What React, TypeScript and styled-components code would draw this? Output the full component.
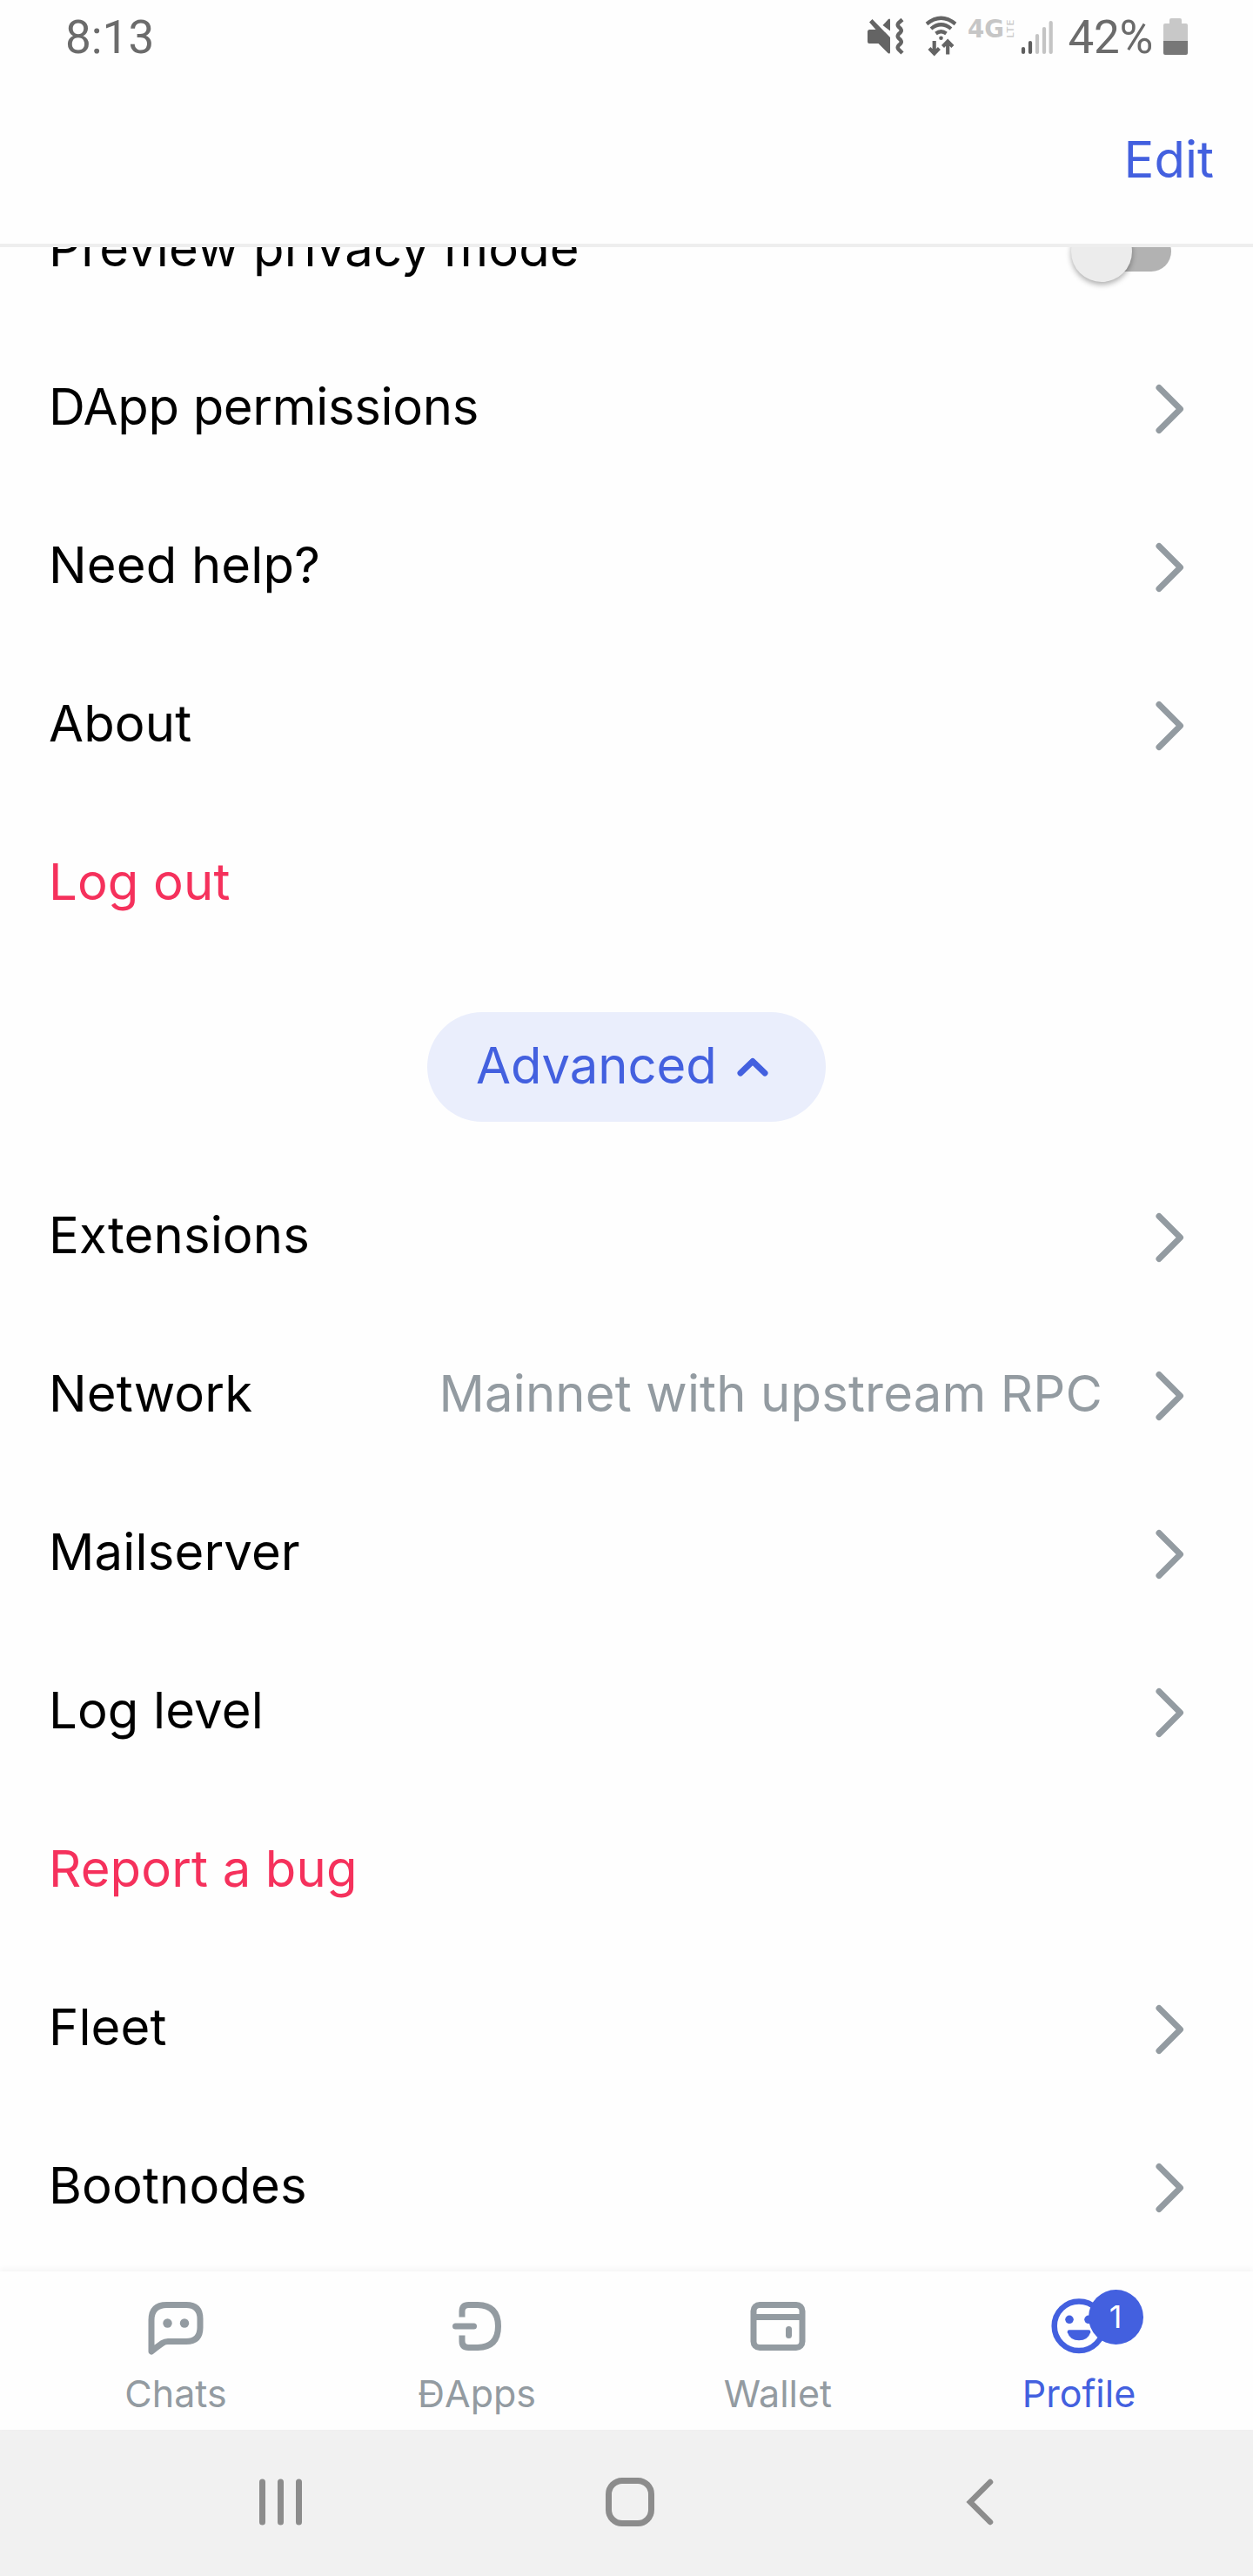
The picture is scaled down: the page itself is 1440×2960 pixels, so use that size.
import React from 'react';
import styled, { createGlobalStyle, css } from 'styled-components';

const blue = '#4360df';
const gray = '#939ba1';

const GlobalStyle = createGlobalStyle`
  * { box-sizing: border-box; }
  body { margin: 0; background: #fefefe; }
`;

const Screen = styled.div`
  width: 1440px;
  height: 2960px;
  display: flex;
  flex-direction: column;
  overflow: hidden;
  background: #fefefe;
  font-family: Inter, 'Liberation Sans', sans-serif;
`;

const StatusBar = styled.header`
  height: 84px;
  flex: none;
  display: flex;
  align-items: center;
  justify-content: space-between;
  padding: 0 75px;
  font-family: Roboto, sans-serif;
  font-size: 53px;
  line-height: 84px;
  color: #6b6b6b;
`;

const Clock = styled.span`
  padding-top: 2px;
`;

const StatusIcons = styled.div`
  display: flex;
  align-items: center;
  height: 84px;
`;

const StatusIcon = styled.span<{ $gap?: number; $lift?: number }>`
  display: flex;
  margin-left: ${(p) => p.$gap ?? 0}px;
  margin-bottom: ${(p) => p.$lift ?? 0}px;
`;

const Percent = styled.span`
  padding-top: 2px;
  margin-left: 17px;
  margin-right: 12px;
  letter-spacing: -0.3px;
`;

const Toolbar = styled.div`
  height: 200px;
  flex: none;
  display: flex;
  align-items: center;
  justify-content: flex-end;
  padding: 1px 45px 0 0;
  border-bottom: 4px solid #eee;
`;

const EditButton = styled.button`
  border: 0;
  padding: 0;
  background: none;
  font: 400 58px/70px Inter, sans-serif;
  color: ${blue};
`;

const List = styled.main`
  flex: none;
  height: 2326px;
  overflow: hidden;
`;

const ListContent = styled.div`
  margin-top: -87px;
`;

const Row = styled.div`
  height: 182px;
  display: flex;
  align-items: center;
  padding: 0 79px 0 56px;
`;

const rowText = css`
  font-size: 58px;
  line-height: 70px;
  padding-bottom: 6px;
  white-space: nowrap;
`;

const Label = styled.span<{ $danger?: boolean; $tracking?: number }>`
  ${rowText}
  flex: 1;
  letter-spacing: ${(p) => p.$tracking ?? 0.15}px;
  color: ${(p) => (p.$danger ? '#f5315c' : '#000')};
`;

const Value = styled.span`
  ${rowText}
  letter-spacing: 0.15px;
  color: ${gray};
  margin-right: 60px;
`;

const Track = styled.span`
  width: 105px;
  height: 46px;
  margin-right: 15px;
  margin-top: 2px;
  border-radius: 23px;
  background: #b2b2b2;
  display: flex;
  align-items: center;
`;

const Thumb = styled.span`
  width: 70px;
  height: 70px;
  flex: none;
  margin-left: -10px;
  border-radius: 50%;
  background: #ececec;
  box-shadow: 0 3px 6px rgba(0, 0, 0, 0.32);
`;

const AdvancedRow = styled.div`
  height: 224px;
  display: flex;
  justify-content: center;
  padding-top: 56px;
`;

const Chip = styled.button`
  width: 458px;
  height: 126px;
  border: 0;
  border-radius: 63px;
  padding: 0 66px 0 56px;
  display: flex;
  align-items: center;
  justify-content: space-between;
  background: #eaeefc;
  color: ${blue};
  font: 400 58px/118px Inter, sans-serif;
`;

const ChipText = styled.span`
  padding-bottom: 5px;
  letter-spacing: -0.1px;
`;

const TabBar = styled.nav`
  height: 182px;
  flex: none;
  display: flex;
  padding: 0 27px 0 29px;
  background: #fefefe;
  box-shadow: 0 -3px 6px rgba(0, 0, 0, 0.04);
  position: relative;
`;

const Tab = styled.div<{ $active?: boolean }>`
  flex: 1;
  display: flex;
  flex-direction: column;
  align-items: center;
  padding-top: 21px;
  color: ${(p) => (p.$active ? blue : gray)};
`;

const TabIcon = styled.span`
  width: 84px;
  height: 84px;
  position: relative;
  svg { display: block; }
`;

const TabLabel = styled.span`
  margin-top: 9px;
  font-size: 43px;
  line-height: 52px;
  white-space: nowrap;
`;

const Badge = styled.span`
  position: absolute;
  left: 52.5px;
  top: 0;
  width: 63px;
  height: 63px;
  border-radius: 50%;
  background: ${blue};
  color: #fff;
  font-size: 36px;
  line-height: 63px;
  text-align: center;
`;

const SystemNav = styled.footer`
  flex: 1;
  background: #f1f1f1;
  color: #8c8c8c;
  display: flex;
  align-items: center;
  justify-content: space-between;
  padding: 0 298px 3px;
`;

const HomeKey = styled.span`
  display: flex;
  margin-right: 9px;
`;

const Chevron = () => (
  <svg width="34" height="60" viewBox="0 0 34 60" fill="none" stroke={gray} strokeWidth="7" strokeLinecap="round" strokeLinejoin="round">
    <path d="M5 5.500 29.500 30 5 54.500" />
  </svg>
);

const MuteIcon = () => (
  <svg width="42" height="43" viewBox="0 0 42 43" fill="#646464">
    <path d="M2.500 14H9.500L2 5.500 5.500 2 26 23V40Q26 42.500 23.500 41L12.500 30H2Q0 30 0 28V16.500Q0 14 2.500 14z" />
    <path d="M17.500 9 24 2Q26 .500 26 3V15.500z" />
    <path d="M40 2.500 35.500 6.500Q34 8.500 35.500 10.500L38 13Q39.500 15 38 17L35.500 19.500Q34 21.500 35.500 23.500L38 26Q39.500 28 38 30L35.500 32.500Q34 34.500 35.500 36.500L40 41" fill="none" stroke="#646464" strokeWidth="4.500" />
  </svg>
);

const WifiIcon = () => (
  <svg width="38" height="48" viewBox="0 0 38 48" fill="none" stroke="#646464" strokeWidth="4.200">
    <path d="M2 9.500q16.500-13.500 33 0M7 15q11.500-9.500 23 0M12.500 20.500q6-4.500 12 0" />
    <circle cx="18.500" cy="25.800" r="2.300" fill="#646464" stroke="none" />
    <path d="M10.700 29v14.500M5 37.500l5.700 6 5.700-6M26.200 44.500V30M20.500 35.500l5.700-6 5.700 6" />
  </svg>
);

const LteIcon = () => (
  <svg width="54" height="42" viewBox="0 0 54 42" fill="#c6c6c6" fontFamily="'DejaVu Sans', sans-serif">
    <text x="0" y="22" fontSize="28" fontWeight="700" textLength="42" lengthAdjust="spacingAndGlyphs">4G</text>
    <text transform="translate(52.500 22.500) rotate(-90)" fontSize="11" textLength="21" lengthAdjust="spacing">LTE</text>
  </svg>
);

const SignalIcon = () => (
  <svg width="38" height="42" viewBox="0 0 38 42" strokeWidth="4.200" strokeLinecap="round">
    <path d="M3 35v4M11 28v11" stroke="#5e5e5e" />
    <path d="M19 20v19M27 12v27M34.700 5v34" stroke="#c4c4c4" />
  </svg>
);

const BatteryIcon = () => (
  <svg width="28" height="42" viewBox="0 0 28 42">
    <path d="M2 6h5V2q0-2 2-2h10q2 0 2 2v4h5q2 0 2 2v18H0V8q0-2 2-2z" fill="#c8c8c8" />
    <path d="M0 26h28v14q0 2-2 2H2q-2 0-2-2z" fill="#777" />
  </svg>
);

const ChatsIcon = () => (
  <svg width="84" height="84" viewBox="0 0 84 84" fill="none" stroke="currentColor" strokeWidth="7" strokeLinejoin="round">
    <path d="M14 71V35Q14 17.500 31.500 17.500H54Q70 17.500 70 33.500V43.500Q70 59.500 54 59.500H33Q29.500 59.500 26.500 61.500Q20 66 14 71Z" />
    <circle cx="32.500" cy="38.500" r="5.200" fill="currentColor" stroke="none" />
    <circle cx="52" cy="38.500" r="5.200" fill="currentColor" stroke="none" />
  </svg>
);

const DAppsIcon = () => (
  <svg width="84" height="84" viewBox="0 0 84 84" fill="none" stroke="currentColor" strokeWidth="7">
    <path d="M25 31.500V25Q25 17.500 32.500 17.500H43Q66.500 18 66.500 42T43 66.500H32.500Q25 66.500 25 59V52.500" />
    <path d="M17.500 42h21" strokeLinecap="round" />
  </svg>
);

const WalletIcon = () => (
  <svg width="84" height="84" viewBox="0 0 84 84" fill="none" stroke="currentColor" strokeWidth="7">
    <rect x="14" y="17.500" width="56" height="49" rx="7" />
    <path d="M14 31.500h56" />
    <path d="M54.500 45.500v7" strokeLinecap="round" />
  </svg>
);

const ProfileIcon = () => (
  <svg width="84" height="84" viewBox="0 0 84 84" fill="currentColor">
    <circle cx="42" cy="41.800" r="28.300" fill="none" stroke="currentColor" strokeWidth="6.500" />
    <circle cx="31" cy="34.300" r="4.800" />
    <circle cx="53" cy="34.300" r="4.800" />
    <path d="M31 46.300h22q2.800 0 2.200 3-3 9-13.200 9t-13.200-9q-.600-3 2.200-3z" />
  </svg>
);

interface ItemProps {
  label: string;
  value?: string;
  danger?: boolean;
  tracking?: number;
}

const Item = ({ label, value, danger, tracking }: ItemProps) => (
  <Row>
    <Label $danger={danger} $tracking={tracking}>{label}</Label>
    {value && <Value>{value}</Value>}
    {!danger && <Chevron />}
  </Row>
);

const mainItems: ItemProps[] = [
  { label: 'DApp permissions', tracking: -0.32 },
  { label: 'Need help?' },
  { label: 'About' },
  { label: 'Log out', danger: true },
];

const advancedItems: ItemProps[] = [
  { label: 'Extensions' },
  { label: 'Network', value: 'Mainnet with upstream RPC' },
  { label: 'Mailserver' },
  { label: 'Log level' },
  { label: 'Report a bug', danger: true },
  { label: 'Fleet' },
  { label: 'Bootnodes' },
];

export default function App() {
  return (
    <>
      <GlobalStyle />
      <Screen>
        <StatusBar>
          <Clock>8:13</Clock>
          <StatusIcons>
            <StatusIcon $lift={1}><MuteIcon /></StatusIcon>
            <StatusIcon $gap={24}><WifiIcon /></StatusIcon>
            <StatusIcon $gap={11}><LteIcon /></StatusIcon>
            <StatusIcon $gap={7}><SignalIcon /></StatusIcon>
            <Percent>42%</Percent>
            <BatteryIcon />
          </StatusIcons>
        </StatusBar>
        <Toolbar>
          <EditButton>Edit</EditButton>
        </Toolbar>
        <List>
          <ListContent>
            <Row>
              <Label>Preview privacy mode</Label>
              <Track><Thumb /></Track>
            </Row>
            {mainItems.map((item) => <Item key={item.label} {...item} />)}
            <AdvancedRow>
              <Chip>
                <ChipText>Advanced</ChipText>
                <svg width="36" height="22" viewBox="0 0 36 22" fill="none" stroke={blue} strokeWidth="7" strokeLinecap="round" strokeLinejoin="round">
                  <path d="M4 18 18 4.500 32 18" />
                </svg>
              </Chip>
            </AdvancedRow>
            {advancedItems.map((item) => <Item key={item.label} {...item} />)}
          </ListContent>
        </List>
        <TabBar>
          <Tab><TabIcon><ChatsIcon /></TabIcon><TabLabel>Chats</TabLabel></Tab>
          <Tab><TabIcon><DAppsIcon /></TabIcon><TabLabel>ĐApps</TabLabel></Tab>
          <Tab><TabIcon><WalletIcon /></TabIcon><TabLabel>Wallet</TabLabel></Tab>
          <Tab $active><TabIcon><ProfileIcon /><Badge>1</Badge></TabIcon><TabLabel>Profile</TabLabel></Tab>
        </TabBar>
        <SystemNav>
          <svg width="49" height="54" viewBox="0 0 49 54" stroke="currentColor" strokeWidth="7" strokeLinecap="round">
            <path d="M3.500 4v46M24.500 4v46M45.500 4v46" />
          </svg>
          <HomeKey>
            <svg width="56" height="56" viewBox="0 0 56 56" fill="none" stroke="currentColor" strokeWidth="7">
              <rect x="3.500" y="3.500" width="49" height="49" rx="15.500" />
            </svg>
          </HomeKey>
          <svg width="32" height="54" viewBox="0 0 32 54" fill="none" stroke="currentColor" strokeWidth="6.500" strokeLinecap="round">
            <path d="M28 4 5 27l23 23" />
          </svg>
        </SystemNav>
      </Screen>
    </>
  );
}
